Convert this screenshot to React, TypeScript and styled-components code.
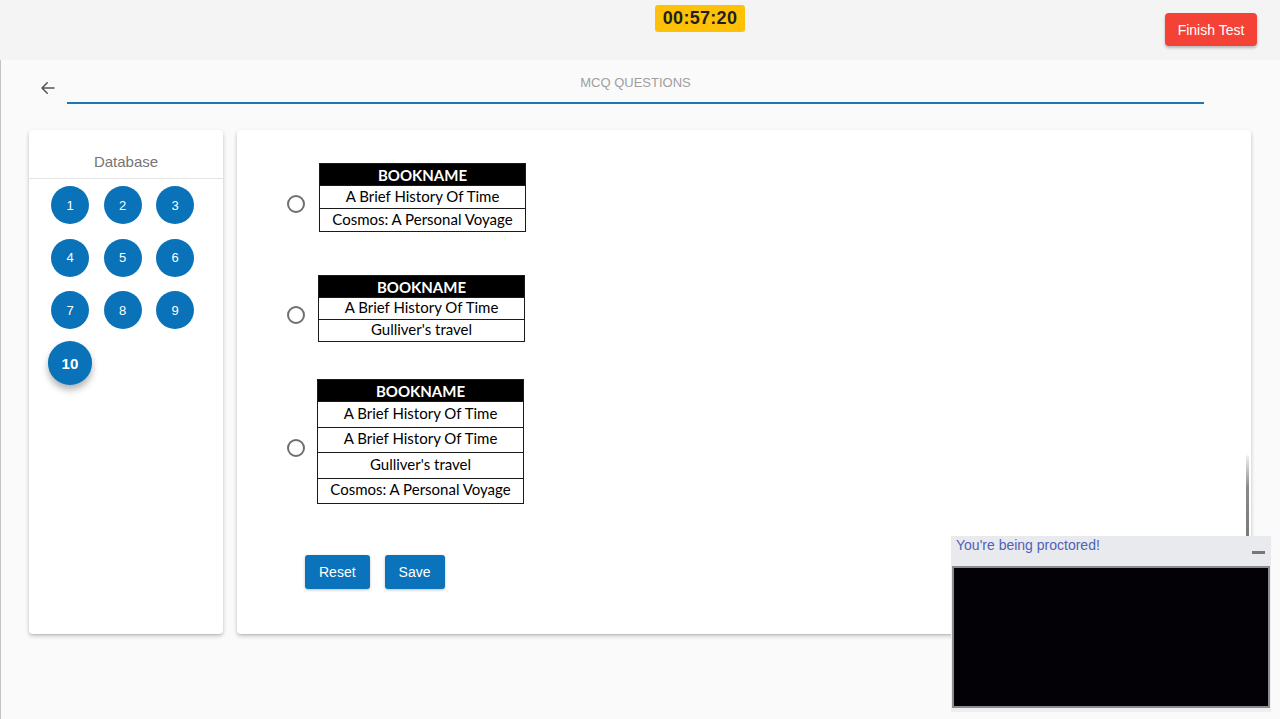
import React from "react";
import styled, { createGlobalStyle } from "styled-components";

const GlobalStyle = createGlobalStyle`
  html, body { margin: 0; padding: 0; }
  body {
    font-family: "Liberation Sans", Arial, sans-serif;
    background: #fafafa;
    overflow: hidden;
  }
  * { box-sizing: border-box; }
`;

const Page = styled.div`
  width: 1280px;
  height: 719px;
  display: flex;
  flex-direction: column;
`;

const Header = styled.header`
  height: 60px;
  background: #f4f4f4;
  display: flex;
  align-items: flex-start;
`;

const Timer = styled.div`
  margin-left: 655px;
  margin-top: 5px;
  width: 90px;
  height: 27px;
  background: #ffc107;
  border-radius: 3px;
  color: #1f1f1f;
  font-weight: 700;
  font-size: 18px;
  display: flex;
  align-items: center;
  justify-content: center;
  letter-spacing: 0.3px;
`;

const Spacer = styled.div`
  flex: 1;
`;

const FinishButton = styled.button`
  margin-top: 13px;
  margin-right: 23px;
  width: 92px;
  height: 33px;
  border: none;
  border-radius: 4px;
  background: #f44336;
  color: #fff;
  font-family: "Liberation Sans", Arial, sans-serif;
  font-size: 14px;
  box-shadow: 0 2px 3px rgba(0, 0, 0, 0.25);
  cursor: pointer;
`;

const Body = styled.main`
  flex: 1;
  border-left: 1px solid #c4c4c4;
  background: #fafafa;
`;

const TitleBar = styled.div`
  display: flex;
  align-items: flex-end;
  padding-left: 37px;
  height: 44px;
`;

const BackButton = styled.div`
  width: 20px;
  height: 20px;
  margin-bottom: 6px;
  color: #555;
  display: flex;
  align-items: center;
  justify-content: center;
`;

const TitleBox = styled.div`
  margin-left: 9px;
  width: 1137px;
  height: 44px;
  border-bottom: 2px solid #1f76b6;
  display: flex;
  align-items: center;
  justify-content: center;
  padding-top: 2px;
  color: #9e9e9e;
  font-size: 13px;
`;

const Content = styled.div`
  display: flex;
  gap: 14px;
  padding: 26px 0 0 28px;
`;

const Card = styled.section<{ $w: number }>`
  width: ${(p) => p.$w}px;
  height: 504px;
  background: #fff;
  border-radius: 4px;
  box-shadow: 0 2px 4px rgba(0, 0, 0, 0.22), 0 1px 1px rgba(0, 0, 0, 0.08);
`;

const SideTitle = styled.div`
  height: 49px;
  border-bottom: 1px solid #e4e4e4;
  display: flex;
  align-items: center;
  justify-content: center;
  padding-top: 14px;
  color: #757575;
  font-size: 15px;
`;

const NumberGrid = styled.div`
  display: grid;
  grid-template-columns: repeat(3, 38px);
  grid-auto-rows: 38px;
  column-gap: 14.5px;
  row-gap: 14.5px;
  padding: 7px 0 0 22px;
`;

const NumberButton = styled.div<{ $active?: boolean }>`
  width: 38px;
  height: 38px;
  border-radius: 50%;
  background: #0a72b9;
  color: #fff;
  font-size: 13px;
  font-weight: ${(p) => (p.$active ? 700 : 400)};
  display: flex;
  align-items: center;
  justify-content: center;
  transform: ${(p) => (p.$active ? "scale(1.16)" : "none")};
  box-shadow: ${(p) => (p.$active ? "0 4px 6px rgba(0,0,0,0.3)" : "none")};
`;

const Options = styled.div`
  display: flex;
  flex-direction: column;
  padding: 33px 0 0 50px;
`;

const Option = styled.label<{ $top: number; $dx: number }>`
  display: flex;
  align-items: center;
  margin-top: ${(p) => p.$top}px;
  gap: ${(p) => 14 + p.$dx}px;
`;

const Radio = styled.span`
  width: 18px;
  height: 18px;
  border-radius: 50%;
  border: 2px solid #6f6f6f;
  margin-top: 13px;
  flex-shrink: 0;
`;

const BookTable = styled.table<{ $rh: number }>`
  width: 207px;
  border-collapse: collapse;
  font-family: Lato, "Open Sans", sans-serif;
  font-size: 15px;
  color: #000;
  th, td {
    border: 1px solid #1a1a1a;
    padding: 0 0 2px;
    text-align: center;
    line-height: 1;
  }
  th {
    background: #000;
    color: #fff;
    font-weight: 700;
    height: 22px;
    padding: 1px 0 0;
  }
  td {
    height: ${(p) => p.$rh}px;
  }
`;

const Actions = styled.div`
  display: flex;
  gap: 15px;
  padding: 51px 0 0 68px;
`;

const ActionButton = styled.button`
  height: 34px;
  padding: 0 14px;
  border: none;
  border-radius: 3px;
  background: #0a73bb;
  color: #fff;
  font-family: "Liberation Sans", Arial, sans-serif;
  font-size: 14px;
  box-shadow: 0 1px 3px rgba(0, 0, 0, 0.25);
`;

const Proctor = styled.div`
  position: fixed;
  right: 9px;
  bottom: 7px;
  width: 320px;
  height: 176px;
  background: #eceef1;
  display: flex;
  flex-direction: column;
`;

const Handle = styled.div`
  position: absolute;
  right: 22px;
  top: -81px;
  width: 3px;
  height: 81px;
  background: linear-gradient(to bottom, rgba(120,120,120,0.1), #8a8a8a 40%, #7a7a7a);
  border-radius: 2px 2px 0 0;
`;

const ProctorHead = styled.div`
  height: 30px;
  display: flex;
  align-items: flex-start;
  justify-content: space-between;
  padding: 1px 6px 0 5px;
  color: #5161b5;
  font-size: 14px;
  background: #e8eaee;
`;

const Minimize = styled.span`
  width: 13px;
  height: 3px;
  background: #777;
  margin-top: 14px;
`;

const Video = styled.div`
  margin: 0 1px;
  height: 142px;
  background: #030006;
  border: 2px solid #8c8c8c;
`;

const books = [
  { rows: ["A Brief History Of Time", "Cosmos: A Personal Voyage"], rh: 23, top: 0, dx: 0 },
  { rows: ["A Brief History Of Time", "Gulliver's travel"], rh: 22, top: 43, dx: -1 },
  {
    rows: [
      "A Brief History Of Time",
      "A Brief History Of Time",
      "Gulliver's travel",
      "Cosmos: A Personal Voyage",
    ],
    rh: 25.5,
    top: 37,
    dx: -2,
  },
];

export default function App() {
  return (
    <Page>
      <GlobalStyle />
      <Header>
        <Timer>00:57:20</Timer>
        <Spacer />
        <FinishButton>Finish Test</FinishButton>
      </Header>
      <Body>
        <TitleBar>
          <BackButton>
            <svg width="18" height="18" viewBox="0 0 24 24" fill="none">
              <path
                d="M20 12H4.5M11 5l-7 7 7 7"
                stroke="#555"
                strokeWidth="2"
                strokeLinecap="round"
                strokeLinejoin="round"
              />
            </svg>
          </BackButton>
          <TitleBox>MCQ QUESTIONS</TitleBox>
        </TitleBar>
        <Content>
          <Card $w={194}>
            <SideTitle>Database</SideTitle>
            <NumberGrid>
              {Array.from({ length: 10 }, (_, i) => (
                <NumberButton key={i} $active={i === 9}>
                  {i + 1}
                </NumberButton>
              ))}
            </NumberGrid>
          </Card>
          <Card $w={1014}>
            <Options>
              {books.map((b, i) => (
                <Option key={i} $top={b.top} $dx={b.dx}>
                  <Radio />
                  <BookTable $rh={b.rh}>
                    <thead>
                      <tr>
                        <th>BOOKNAME</th>
                      </tr>
                    </thead>
                    <tbody>
                      {b.rows.map((r, j) => (
                        <tr key={j}>
                          <td>{r}</td>
                        </tr>
                      ))}
                    </tbody>
                  </BookTable>
                </Option>
              ))}
            </Options>
            <Actions>
              <ActionButton>Reset</ActionButton>
              <ActionButton>Save</ActionButton>
            </Actions>
          </Card>
        </Content>
      </Body>
      <Proctor>
        <Handle />
        <ProctorHead>
          <span>You're being proctored!</span>
          <Minimize />
        </ProctorHead>
        <Video />
      </Proctor>
    </Page>
  );
}
